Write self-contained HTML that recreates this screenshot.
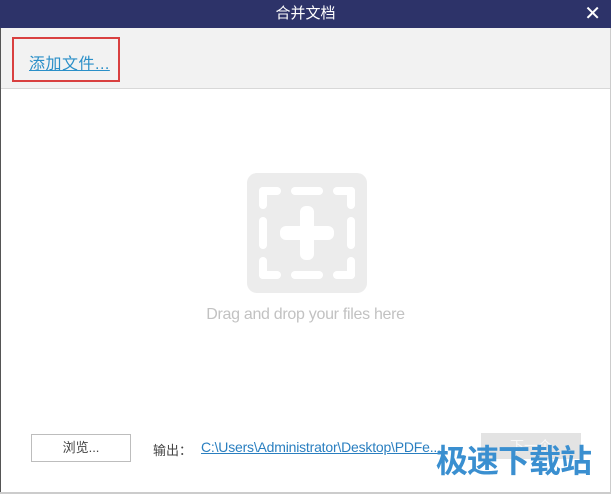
<!DOCTYPE html>
<html><head><meta charset="utf-8"><style>
*{margin:0;padding:0;box-sizing:border-box}
body{width:611px;height:494px;position:relative;background:#fff;font-family:"Liberation Sans","Noto Sans CJK SC",sans-serif;overflow:hidden}
.t{position:absolute;left:0;top:0;width:611px;height:28px;background:#2d3369;color:#fff;font-size:15px;text-align:center;line-height:28px}
.x{position:absolute;right:10px;top:0;font-size:20px;line-height:28px;color:#fff}
.tb{position:absolute;left:1px;top:28px;width:609px;height:61px;background:#f2f2f2;border-bottom:1px solid #d8d8d8}
.red{position:absolute;left:12px;top:37px;width:108px;height:45px;border:2px solid #d94040}
.add{position:absolute;left:29px;top:50px;font-size:16px;letter-spacing:0.5px;color:#2a8fc8;text-decoration:underline}
.lb{position:absolute;left:0;top:28px;width:1px;height:466px;background:#555}
.rb{position:absolute;right:0;top:28px;width:1px;height:466px;background:#ccc}
.bb{position:absolute;left:0;bottom:0;width:611px;height:2px;background:#ccc}
.dd{position:absolute;left:0;width:611px;top:306px;text-align:center;font-size:16px;letter-spacing:-0.3px;color:#c2c2c2}
.br{position:absolute;left:31px;top:434px;width:100px;height:28px;border:1px solid #bdbdbd;background:#fff;font-size:13px;color:#444;text-align:center;line-height:26px}
.o{position:absolute;left:153px;top:440px;font-size:13px;color:#444}
.l{position:absolute;left:201px;top:439px;font-size:14px;letter-spacing:-0.2px;color:#2a7fc0;text-decoration:underline}
.nx{position:absolute;left:481px;top:433px;width:100px;height:26px;background:#e3e3e3;color:#f8f8f8;font-size:14px;text-align:center;line-height:26px}
.wm{position:absolute;left:436px;top:441px;font-size:32px;font-weight:bold;color:#3a8fd0;letter-spacing:-1px;line-height:40px}
</style></head><body>
<div class="t">合并文档</div><div class="x">✕</div>
<div class="tb"></div><div class="red"></div><div class="add">添加文件...</div>
<div class="lb"></div><div class="rb"></div><div class="bb"></div>
<svg style="position:absolute;left:247px;top:173px" width="120" height="120" viewBox="0 0 120 120">
<rect width="120" height="120" rx="10" fill="#ececec"/>
<g fill="#fff">
<rect x="12" y="14" width="22" height="8" rx="4"/><rect x="12" y="14" width="8" height="22" rx="4"/>
<rect x="86" y="14" width="22" height="8" rx="4"/><rect x="100" y="14" width="8" height="22" rx="4"/>
<rect x="12" y="98" width="22" height="8" rx="4"/><rect x="12" y="84" width="8" height="22" rx="4"/>
<rect x="86" y="98" width="22" height="8" rx="4"/><rect x="100" y="84" width="8" height="22" rx="4"/>
<rect x="44" y="14" width="32" height="8" rx="4"/><rect x="44" y="98" width="32" height="8" rx="4"/>
<rect x="12" y="44" width="8" height="32" rx="4"/><rect x="100" y="44" width="8" height="32" rx="4"/>
<rect x="53" y="33" width="14" height="54" rx="6"/><rect x="33" y="53" width="54" height="14" rx="6"/>
</g></svg>
<div class="dd">Drag and drop your files here</div>
<div class="br">浏览...</div>
<div class="o">输出：</div>
<div class="l">C:\Users\Administrator\Desktop\PDFe...</div>
<div class="nx">下一个</div>
<div class="wm">极速下载站</div>
</body></html>
